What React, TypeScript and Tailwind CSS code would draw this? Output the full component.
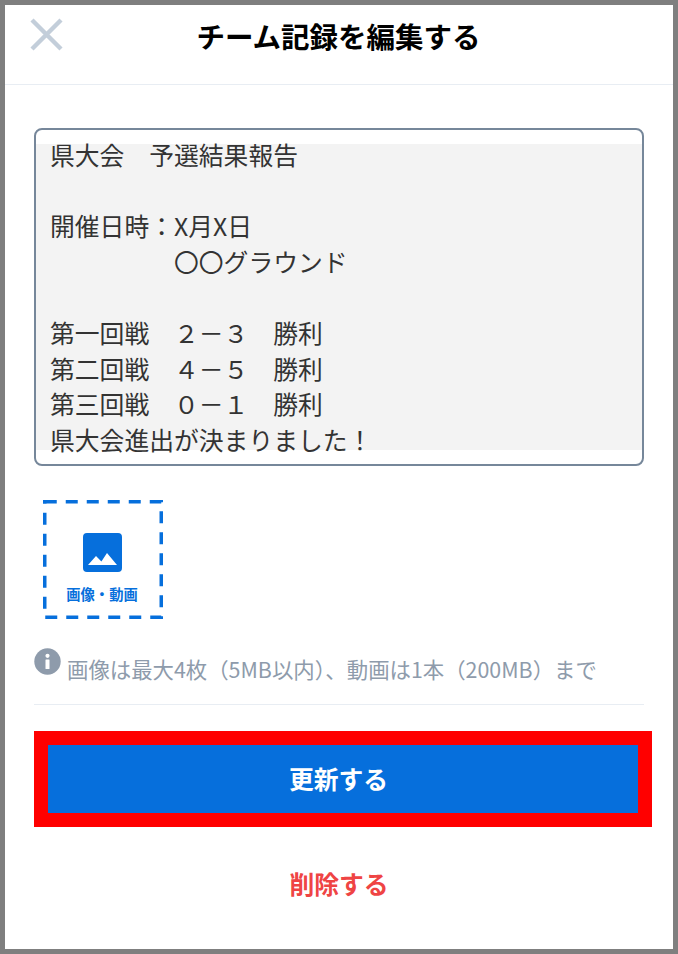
const lines = [
  '県大会　予選結果報告',
  '',
  '開催日時：X月X日',
  '　　　　　〇〇グラウンド',
  '',
  '第一回戦　２－３　勝利',
  '第二回戦　４－５　勝利',
  '第三回戦　０－１　勝利',
  '県大会進出が決まりました！',
];

export default function App() {
  return (
    <div className="w-[678px] h-[954px] bg-white border-[5px] border-[#7f7f7f] flex flex-col font-['Noto_Sans_CJK_JP',sans-serif] overflow-hidden">
      {/* header */}
      <header className="h-[80px] shrink-0 border-b border-[#e8edf3] pl-[20px] pr-[20px] flex items-start">
        <button className="w-[42px] h-[42px] mt-[8px] text-[#c3ceda] flex items-center justify-center">
          <svg width="42" height="42" viewBox="0 0 42 42" fill="none" stroke="currentColor" strokeWidth="4.4">
            <path d="M7 7 L36 36 M36 7 L7 36" />
          </svg>
        </button>
        <h1 className="flex-1 text-center text-[28.5px] leading-[34px] mt-[14px] pr-[43px] font-bold text-black">
          チーム記録を編集する
        </h1>
      </header>

      <main className="flex-1 px-[29px] pt-[43px] flex flex-col">
        <div className="w-[610px] h-[338px] border-2 border-[#76879a] rounded-[8px] py-[14px] flex flex-col">
          <div className="bg-[#f3f3f3] h-[306px] pl-[14px] text-[24.8px] leading-[35.6px] text-[#333] whitespace-pre">
            {lines.map((line, i) => (
              <div key={i} className="h-[35.6px] -translate-y-[7px]">
                {line}
              </div>
            ))}
          </div>
        </div>

        <div className="relative ml-[9px] mt-[34px] w-[120px] h-[119px] pr-[2px] flex flex-col items-center text-[#066fdc]">
          <svg className="absolute inset-0" width="120" height="119" viewBox="0 0 120 119" fill="none">
            <rect x="1.75" y="1.75" width="116.5" height="115.5" stroke="currentColor" strokeWidth="3.5" strokeDasharray="12 9" />
          </svg>
          <svg className="mt-[33px]" width="39" height="39" viewBox="0 0 39 39">
            <path
              fill="currentColor"
              fillRule="evenodd"
              d="M4 0h31a4 4 0 0 1 4 4v31a4 4 0 0 1-4 4H4a4 4 0 0 1-4-4V4a4 4 0 0 1 4-4Z M5 32 L13 23 L18.4 28.5 L24 20 L34 32Z"
            />
          </svg>
          <span className="mt-[13px] text-[14.3px] leading-[18px] font-bold whitespace-nowrap">画像・動画</span>
        </div>

        <div className="mt-[29px] flex items-start h-[31px]">
          <svg className="shrink-0" width="27" height="27" viewBox="0 0 27 27">
            <circle cx="13.5" cy="13.5" r="13.2" fill="#8e9bab" />
            <circle cx="13.5" cy="7.8" r="2.1" fill="#fff" />
            <rect x="11.5" y="11.5" width="4" height="9.5" rx="0.5" fill="#fff" />
          </svg>
          <p className="ml-[6px] mt-[6px] text-[21.4px] leading-[30px] text-[#8e9bab] whitespace-nowrap">
            画像は最大4枚（5MB以内）、動画は1本（200MB）まで
          </p>
        </div>

        <div className="mt-[25px] w-[610px] border-t border-[#e8edf3]" />

        <button className="mt-[26px] w-[618px] h-[96px] border-[14px] border-[#ff0000] bg-[#066fdc] text-white text-[24.8px] font-bold pr-[9px]">
          更新する
        </button>

        <button className="mt-[37px] w-[610px] h-[40px] text-[#ef4444] text-[24.8px] font-bold">削除する</button>
      </main>
    </div>
  );
}
